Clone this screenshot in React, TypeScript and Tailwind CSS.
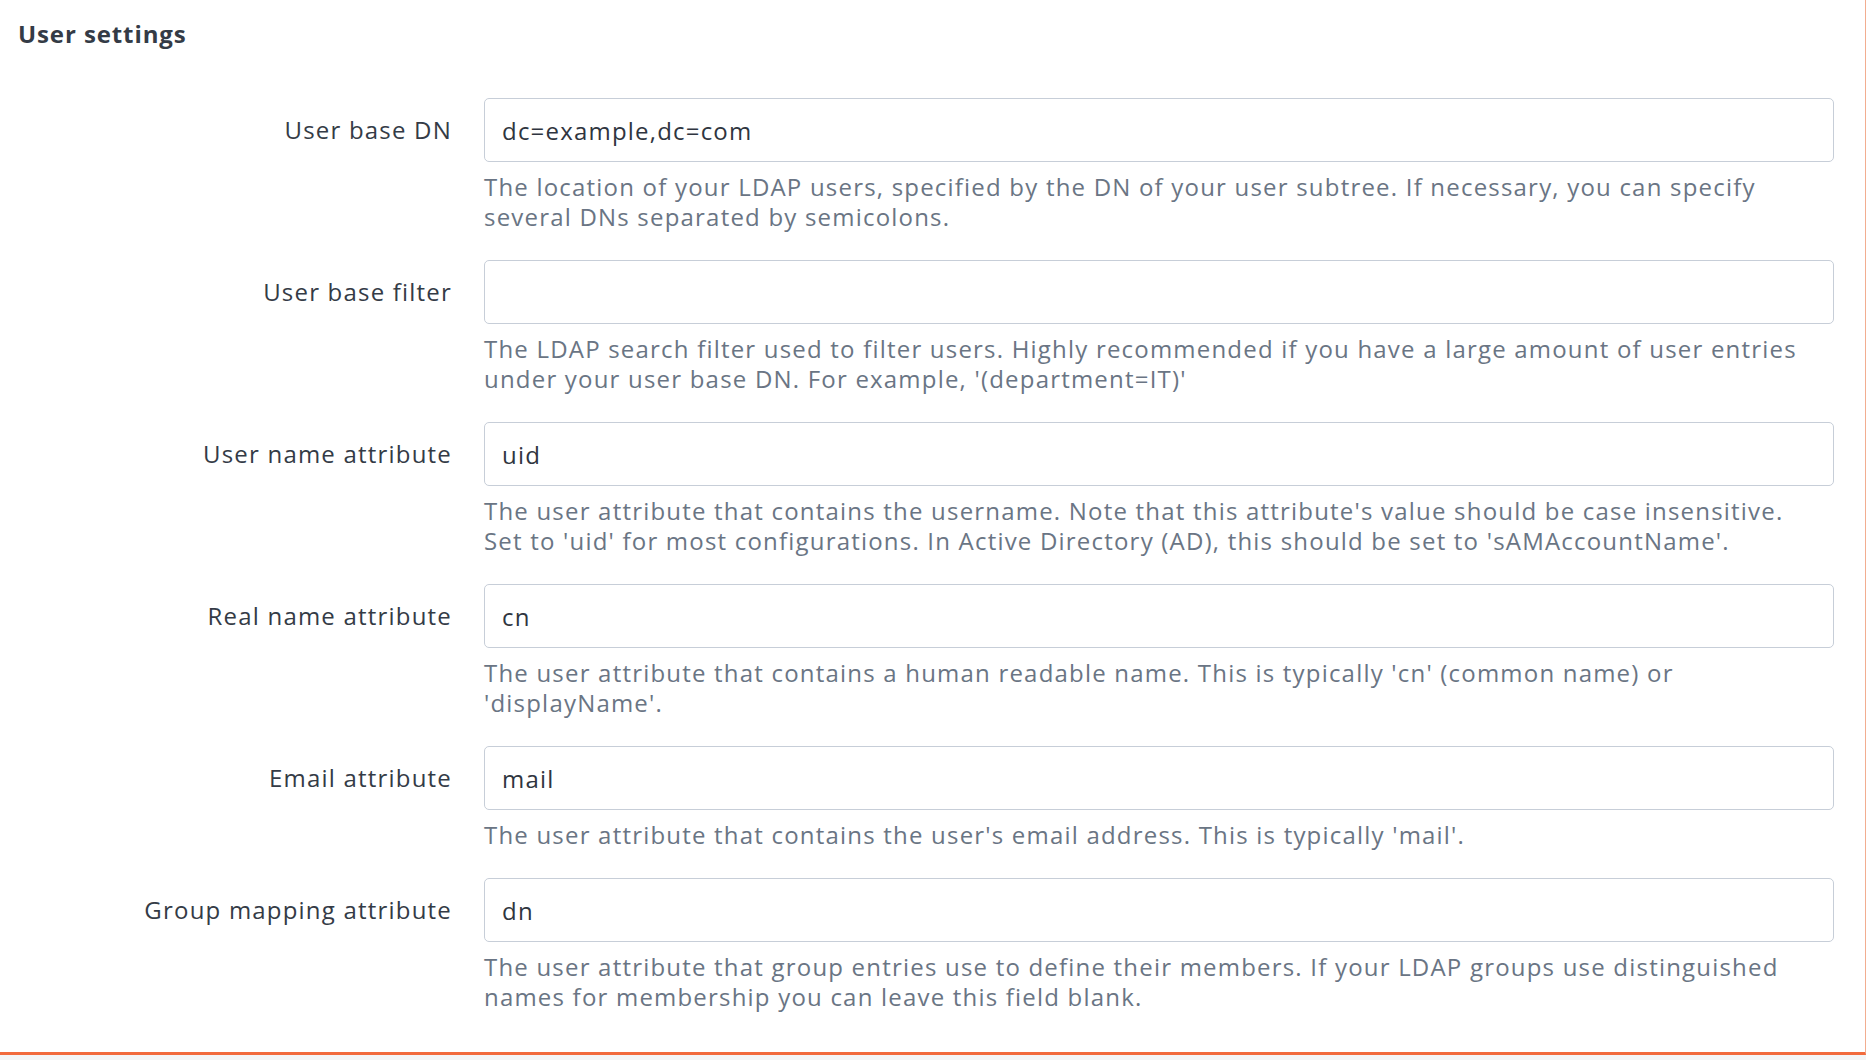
const fields = [
  {
    label: 'User base DN',
    value: 'dc=example,dc=com',
    help: [
      'The location of your LDAP users, specified by the DN of your user subtree. If necessary, you can specify',
      'several DNs separated by semicolons.',
    ],
  },
  {
    label: 'User base filter',
    value: '',
    help: [
      'The LDAP search filter used to filter users. Highly recommended if you have a large amount of user entries',
      "under your user base DN. For example, '(department=IT)'",
    ],
  },
  {
    label: 'User name attribute',
    value: 'uid',
    help: [
      "The user attribute that contains the username. Note that this attribute's value should be case insensitive.",
      "Set to 'uid' for most configurations. In Active Directory (AD), this should be set to 'sAMAccountName'.",
    ],
  },
  {
    label: 'Real name attribute',
    value: 'cn',
    help: [
      "The user attribute that contains a human readable name. This is typically 'cn' (common name) or",
      "'displayName'.",
    ],
  },
  {
    label: 'Email attribute',
    value: 'mail',
    help: ["The user attribute that contains the user's email address. This is typically 'mail'."],
  },
  {
    label: 'Group mapping attribute',
    value: 'dn',
    help: [
      'The user attribute that group entries use to define their members. If your LDAP groups use distinguished',
      'names for membership you can leave this field blank.',
    ],
  },
];

export default function App() {
  return (
    <div className="min-h-screen bg-[#f4f5f6] font-['Open_Sans',sans-serif] tracking-[1.2px]">
      <div className="bg-white border-r border-r-[#f2ad90] border-b-[3px] border-b-[#f26b3d] pt-[19px] pb-[40px] pr-[31px]">
        <h2 className="pl-[18px] text-[24px] leading-[30px] font-bold tracking-[0.9px] text-[#343b46]">User settings</h2>

        <div className="mt-[49px]">
          {fields.map((f) => (
            <div key={f.label} className="flex mb-[28px] last:mb-0">
              <label className="w-[452px] shrink-0 h-16 flex items-center justify-end text-[24px] text-[#343b46]">
                {f.label}
              </label>
              <div className="flex-1 ml-8">
                <input
                  readOnly
                  value={f.value}
                  className="w-full h-16 px-[17px] rounded-[5px] border border-[#c7ced8] bg-white text-[24px] tracking-[1.2px] text-[#2f3540] outline-none"
                />
                <div className="mt-[10px] text-[24px] leading-[30px] text-[#6a7584]">
                  {f.help.map((line) => (
                    <div key={line} className="whitespace-nowrap">
                      {line}
                    </div>
                  ))}
                </div>
              </div>
            </div>
          ))}
        </div>
      </div>
    </div>
  );
}
